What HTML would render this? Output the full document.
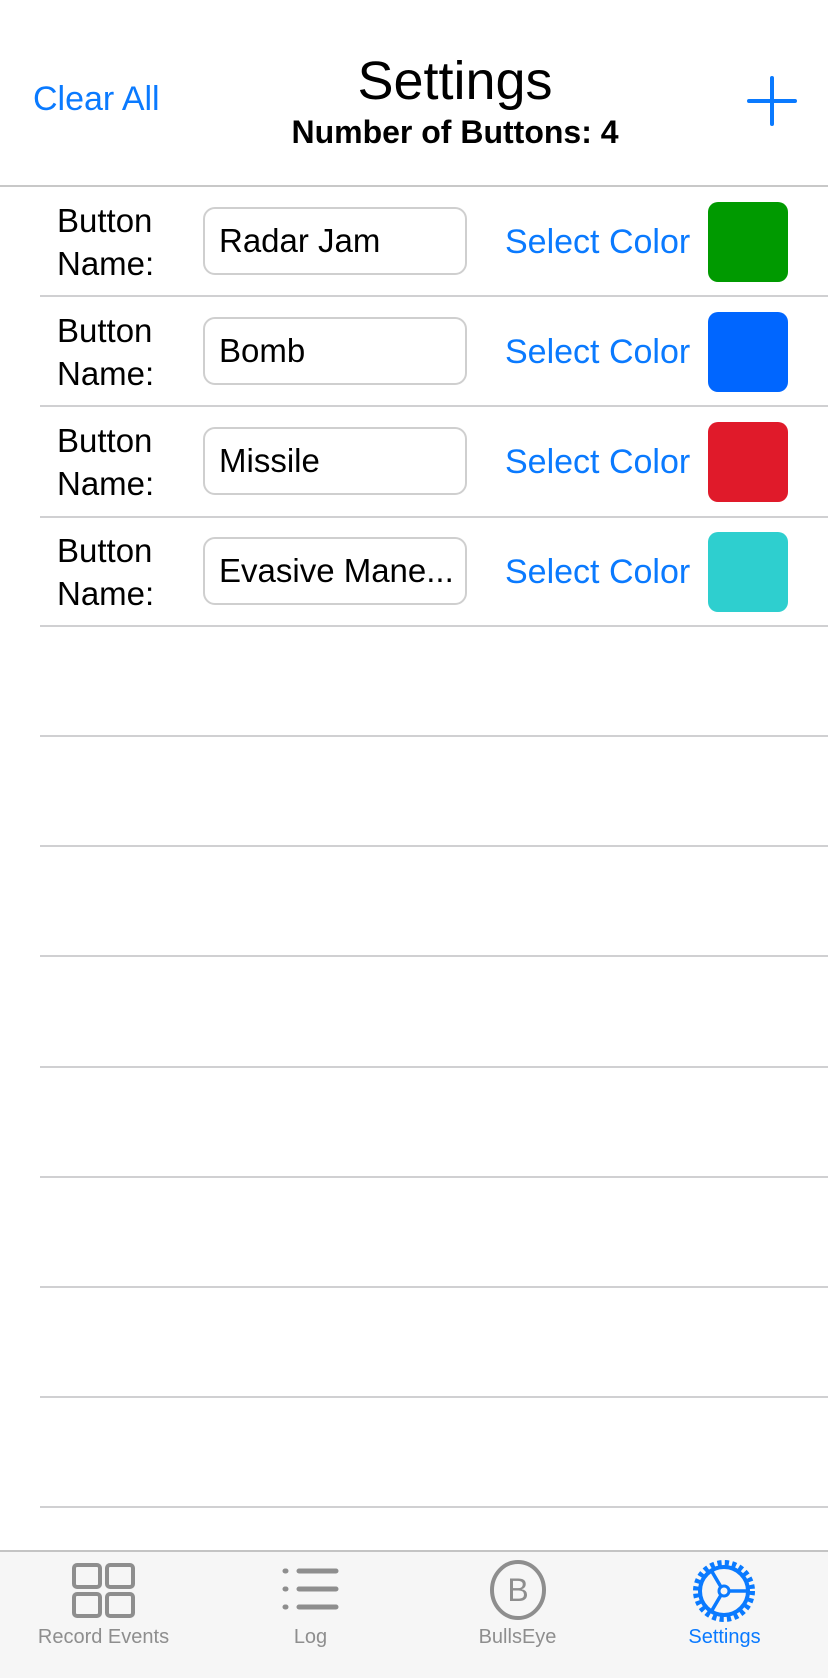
<!DOCTYPE html>
<html><head><meta charset="utf-8"><style>
*{margin:0;padding:0;box-sizing:border-box}
body{width:828px;height:1678px;background:#fff;font-family:"Liberation Sans",sans-serif;position:relative;overflow:hidden}
.a{position:absolute}
.blue{color:#0a7aff}
.sep{position:absolute;left:40px;right:0;height:2px;background:#d0d0d2}
.lbl{position:absolute;left:57px;font-size:33px;line-height:43px;color:#000}
.fld{position:absolute;left:203px;width:264px;height:68px;border:2px solid #cfcfcf;border-radius:12px;font-size:33px;line-height:64px;padding-left:14px;color:#000}
.sel{position:absolute;left:505px;font-size:34px;color:#0a7aff}
.sw{position:absolute;left:708px;width:80px;height:80px;border-radius:10px}
.tab{position:absolute;top:1626px;width:207px;text-align:center;font-size:20px;color:#8e8e8e}
</style></head><body>
<div class="a blue" style="left:33px;top:80px;font-size:34px">Clear All</div>
<div class="a" style="left:41px;width:828px;top:50px;text-align:center;font-size:54px">Settings</div>
<div class="a" style="left:41px;width:828px;top:114px;text-align:center;font-size:32px;font-weight:bold">Number of Buttons: 4</div>
<svg class="a" style="left:747px;top:76px" width="50" height="50"><path d="M25 2V48M2 25H48" stroke="#0a7aff" stroke-width="4" stroke-linecap="round"/></svg>
<div class="a" style="left:0;right:0;top:185px;height:2px;background:#c8c8c8"></div>

<div class="lbl" style="top:199px">Button<br>Name:</div>
<div class="fld" style="top:207px">Radar Jam</div>
<div class="sel" style="top:223px">Select Color</div>
<div class="sw" style="top:202px;background:#009a00"></div>
<div class="sep" style="top:295px"></div>

<div class="lbl" style="top:309px">Button<br>Name:</div>
<div class="fld" style="top:317px">Bomb</div>
<div class="sel" style="top:333px">Select Color</div>
<div class="sw" style="top:312px;background:#0066ff"></div>
<div class="sep" style="top:405px"></div>

<div class="lbl" style="top:419px">Button<br>Name:</div>
<div class="fld" style="top:427px">Missile</div>
<div class="sel" style="top:443px">Select Color</div>
<div class="sw" style="top:422px;background:#e01a2a"></div>
<div class="sep" style="top:516px"></div>

<div class="lbl" style="top:529px">Button<br>Name:</div>
<div class="fld" style="top:537px">Evasive Mane...</div>
<div class="sel" style="top:553px">Select Color</div>
<div class="sw" style="top:532px;background:#2ecfcf"></div>
<div class="sep" style="top:625px"></div>

<div class="sep" style="top:735px"></div>
<div class="sep" style="top:845px"></div>
<div class="sep" style="top:955px"></div>
<div class="sep" style="top:1066px"></div>
<div class="sep" style="top:1176px"></div>
<div class="sep" style="top:1286px"></div>
<div class="sep" style="top:1396px"></div>
<div class="sep" style="top:1506px"></div>

<div class="a" style="left:0;right:0;top:1550px;bottom:0;background:#f6f6f6;border-top:2px solid #c4c4c4"></div>
<svg class="a" style="left:72px;top:1563px" width="64" height="56"><g fill="none" stroke="#8e8e8e" stroke-width="4"><rect x="2" y="2" width="26" height="22" rx="3"/><rect x="35" y="2" width="26" height="22" rx="3"/><rect x="2" y="31" width="26" height="22" rx="3"/><rect x="35" y="31" width="26" height="22" rx="3"/></g></svg>
<svg class="a" style="left:280px;top:1565px" width="60" height="50"><g stroke="#8e8e8e" stroke-width="5" stroke-linecap="round"><path d="M5 6h1M5 24h1M5 42h1M19 6h37M19 24h37M19 42h37"/></g></svg>
<svg class="a" style="left:488px;top:1560px" width="60" height="60"><ellipse cx="30" cy="30" rx="26" ry="28" fill="none" stroke="#8e8e8e" stroke-width="4"/><text x="30" y="41" text-anchor="middle" font-family="Liberation Sans" font-size="32" fill="#8e8e8e">B</text></svg>
<svg class="a" style="left:691px;top:1558px" width="66" height="66" viewBox="0 0 66 66"><circle cx="33" cy="33" r="27" fill="none" stroke="#0a7aff" stroke-width="8" stroke-dasharray="4 3.1"/><circle cx="33" cy="33" r="24" fill="none" stroke="#0a7aff" stroke-width="4"/><circle cx="33" cy="33" r="5" fill="none" stroke="#0a7aff" stroke-width="3"/><path d="M38 33H57M30 29L20 12M30 37L20 54" stroke="#0a7aff" stroke-width="3.5"/></svg>
<div class="tab" style="left:0">Record Events</div>
<div class="tab" style="left:207px">Log</div>
<div class="tab" style="left:414px">BullsEye</div>
<div class="tab" style="left:621px;color:#0a7aff">Settings</div>
</body></html>
